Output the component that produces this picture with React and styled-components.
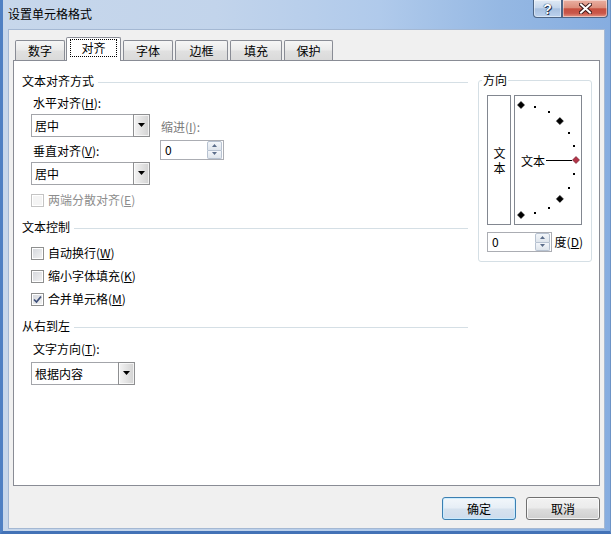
import React from 'react';
import styled, { createGlobalStyle } from 'styled-components';

const FONT = `"Noto Sans CJK SC", "Noto Sans", sans-serif`;

const Global = createGlobalStyle`
  html, body { margin: 0; padding: 0; background: #fff; }
  body { font-family: ${FONT}; font-size: 12px; color: #000; }
  * { box-sizing: border-box; }
`;

const Window = styled.div`
  width: 611px;
  height: 534px;
  display: flex;
  flex-direction: column;
  overflow: hidden;
  background: linear-gradient(to right, #c7d7eb 0%, #c2d4eb 35%, #b0caeb 62%, #95b8e3 82%, #86ade0 100%);
  border-left: 3px solid #4f80c3;
  border-right: 1px solid #6d93c6;
  border-bottom: 3px solid #4372b6;
`;

const TitleBar = styled.div`
  height: 29px;
  flex: none;
  display: flex;
  align-items: flex-start;
  padding-right: 2px;
`;

const Title = styled.div`
  flex: 1;
  padding-left: 5px;
  margin-top: 6px;
  line-height: 16px;
  font-size: 12px;
  color: #000;
`;

const CaptionButton = styled.div`
  height: 18px;
  width: ${p => p.$w}px;
  display: flex;
  align-items: center;
  justify-content: center;
  border: 1px solid #4d6585;
  border-top: none;
  border-radius: ${p => p.$radius};
  box-shadow: inset 0 0 0 1px rgba(255, 255, 255, 0.45);
  background: ${p => p.$bg};
`;

const HelpGlyph = styled.span`
  font-family: "Liberation Sans", sans-serif;
  font-weight: bold;
  font-size: 14px;
  line-height: 14px;
  color: #fff;
  text-shadow: 0 0 1px #1d2d48, 0 0 1px #1d2d48, 1px 1px 0 #2b3e5e;
`;

const Body = styled.div`
  flex: 1;
  margin: 0 5px 2px 5px;
  background: #f0f0f0;
  border: 1px solid #a4b8d3;
  padding: 7px 4px 0 4px;
  display: flex;
  flex-direction: column;
`;

const TabRow = styled.div`
  height: 24px;
  flex: none;
  display: flex;
  align-items: flex-end;
  gap: 2px;
  padding-left: 2px;
  margin-bottom: -1px;
  position: relative;
  z-index: 1;
`;

const Tab = styled.div`
  width: ${p => p.$w}px;
  height: ${p => (p.$active ? 24 : 20)}px;
  margin-bottom: ${p => (p.$active ? 0 : 1)}px;
  margin-left: ${p => (p.$active ? -1 : 0)}px;
  border: 1px solid #898c95;
  border-bottom: none;
  border-radius: 2px 2px 0 0;
  background: ${p =>
    p.$active ? '#fff' : 'linear-gradient(#f6f6f6, #ebebeb 45%, #e0e0e0 55%, #dadada)'};
  display: flex;
  justify-content: center;
  align-items: ${p => (p.$active ? 'flex-start' : 'center')};
  padding-top: ${p => (p.$active ? 1 : 0)}px;
  line-height: 16px;
`;

const Focus = styled.span`
  border: 1px dotted #000;
  padding: 0 10px;
  line-height: 16px;
`;

const Panel = styled.div`
  height: 426px;
  flex: none;
  background: #fff;
  border: 1px solid #898c95;
  display: flex;
  gap: 10px;
  padding: 12px 7px 0 8px;
`;

const LeftCol = styled.div`
  width: 446px;
  display: flex;
  flex-direction: column;
`;

const SectionHeader = styled.div`
  height: 16px;
  line-height: 16px;
  display: flex;
  align-items: center;
  gap: 4px;
  margin-top: ${p => p.$mt || 0}px;
  &::after {
    content: '';
    flex: 1;
    height: 1px;
    margin-top: 2px;
    background: #d5dfe5;
  }
`;

const Indent = styled.div`
  padding-left: 9px;
  display: flex;
  flex-direction: column;
`;

const FieldLabel = styled.div`
  height: 16px;
  line-height: 16px;
  margin-left: ${p => (p.$ml === undefined ? 2 : p.$ml)}px;
  margin-top: ${p => p.$mt || 0}px;
  color: ${p => (p.$dim ? '#7c7c7c' : '#000')};
  white-space: nowrap;
`;

const AlignRow = styled.div`
  display: flex;
  gap: 10px;
`;

const SubCol = styled.div`
  display: flex;
  flex-direction: column;
  padding-top: ${p => p.$pt || 0}px;
`;

const Combo = styled.div`
  width: ${p => p.$w}px;
  height: ${p => p.$h || 23}px;
  margin-top: ${p => p.$mt || 0}px;
  border: 1px solid #a3a5aa;
  background: #fff;
  display: flex;
  align-items: center;
  padding-left: 3px;
`;

const ComboText = styled.span`
  flex: 1;
  line-height: 16px;
`;

const DropBtn = styled.div`
  width: 17px;
  align-self: stretch;
  margin: -1px -1px -1px 0;
  border: 1px solid #8e8f91;
  background: linear-gradient(to right, #f4f4f4, #e3e3e3 50%, #d2d2d2);
  box-shadow: inset 0 0 0 1px rgba(255, 255, 255, 0.7);
  display: flex;
  align-items: center;
  justify-content: center;
`;

const Spinner = styled.div`
  width: ${p => p.$w}px;
  height: 20px;
  margin-top: ${p => p.$mt || 0}px;
  border: 1px solid #abadb3;
  background: #fff;
  display: flex;
  align-items: center;
  padding-left: 4px;
`;

const SpinText = styled.span`
  flex: 1;
  line-height: 16px;
`;

const SpinButtons = styled.div`
  width: 15px;
  height: 18px;
  display: flex;
  flex-direction: column;
  margin-right: 1px;
`;

const SpinHalf = styled.div`
  flex: 1;
  border: 1px solid #b7c2d1;
  border-radius: ${p => (p.$up ? '2px 2px 0 0' : '0 0 2px 2px')};
  border-top-width: ${p => (p.$up ? 1 : 0)}px;
  background: linear-gradient(#f3f6fa, #dfe5ec);
  display: flex;
  align-items: center;
  justify-content: center;
`;

const CheckRow = styled.div`
  height: 16px;
  display: flex;
  align-items: center;
  margin-top: ${p => p.$mt || 0}px;
  color: ${p => (p.$disabled ? '#8d8d8d' : '#000')};
  line-height: 16px;
`;

const CheckBox = styled.span`
  width: 13px;
  height: 13px;
  flex: none;
  border: 1px solid ${p => (p.$disabled ? '#c4c4c4' : '#8e8f8f')};
  background: ${p =>
    p.$disabled ? '#f4f4f4' : 'linear-gradient(135deg, #d3d6db, #f4f4f4)'};
  box-shadow: inset 0 0 0 1px #fff;
  margin-right: 4px;
  display: flex;
  align-items: center;
  justify-content: center;
`;

const Group = styled.fieldset`
  width: 114px;
  margin: -1px 0 0 0;
  align-self: flex-start;
  border: 1px solid #d5dfe5;
  border-radius: 3px;
  padding: 7px 8px 9px 3px;
  min-width: 0;
`;

const Legend = styled.legend`
  padding: 0 1px;
  line-height: 16px;
  font-size: 12px;
`;

const GroupContent = styled.div`
  margin-left: 5px;
  display: flex;
  flex-direction: column;
`;

const OrientRow = styled.div`
  display: flex;
  gap: 3px;
`;

const VertBox = styled.div`
  width: 24px;
  height: 130px;
  border: 1px solid #828790;
  display: flex;
  align-items: center;
  justify-content: center;
`;

const VertText = styled.span`
  writing-mode: vertical-rl;
  text-orientation: upright;
  letter-spacing: 3px;
  line-height: 16px;
  margin-top: 3px;
`;

const DialBox = styled.div`
  width: 68px;
  height: 130px;
  border: 1px solid #828790;
  display: flex;
`;

const DegreeRow = styled.div`
  display: flex;
  align-items: center;
  margin-top: 7px;
`;

const DegreeLabel = styled.span`
  margin-left: 3px;
  line-height: 16px;
  white-space: nowrap;
`;

const ButtonRow = styled.div`
  display: flex;
  justify-content: flex-end;
  gap: 10px;
  margin-top: 11px;
`;

const PushButton = styled.div`
  width: 74px;
  height: 23px;
  border: 1px solid ${p => (p.$default ? '#3c7fb1' : '#707070')};
  border-radius: 3px;
  background: ${p =>
    p.$default
      ? 'linear-gradient(#f2f7fb, #e6eef6 48%, #d6e2ee 52%, #cddced)'
      : 'linear-gradient(#f2f2f2, #ebebeb 48%, #dddddd 52%, #cfcfcf)'};
  box-shadow: inset 0 0 0 1px ${p => (p.$default ? 'rgba(200,235,255,0.9)' : 'rgba(255,255,255,0.75)')};
  display: flex;
  align-items: center;
  justify-content: center;
  line-height: 16px;
`;

const Arrow = ({ down = true, color = '#000', w = 7 }) => (
  <svg width={w} height={Math.ceil(w / 2) + 1} viewBox={`0 0 ${w} ${Math.ceil(w / 2) + 1}`}>
    {down ? (
      <polygon points={`0,0 ${w},0 ${w / 2},${Math.ceil(w / 2)}`} fill={color} />
    ) : (
      <polygon points={`0,${Math.ceil(w / 2)} ${w},${Math.ceil(w / 2)} ${w / 2},0`} fill={color} />
    )}
  </svg>
);

const SpinBox = ({ w, mt }) => (
  <Spinner $w={w} $mt={mt}>
    <SpinText>0</SpinText>
    <SpinButtons>
      <SpinHalf $up>
        <Arrow down={false} color="#5b6d8a" w={5} />
      </SpinHalf>
      <SpinHalf>
        <Arrow color="#5b6d8a" w={5} />
      </SpinHalf>
    </SpinButtons>
  </Spinner>
);

const ComboBox = ({ w, h, mt, children }) => (
  <Combo $w={w} $h={h} $mt={mt}>
    <ComboText>{children}</ComboText>
    <DropBtn>
      <Arrow w={7} />
    </DropBtn>
  </Combo>
);

const Check = ({ checked, disabled, mt, children }) => (
  <CheckRow $mt={mt} $disabled={disabled}>
    <CheckBox $disabled={disabled}>
      {checked && (
        <svg width="9" height="9" viewBox="0 0 9 9">
          <path d="M1 4.5 L3.5 7 L8 1.5" fill="none" stroke="#3d4f7a" strokeWidth="1.7" />
        </svg>
      )}
    </CheckBox>
    <span>{children}</span>
  </CheckRow>
);

const Dial = () => {
  const cx = 6;
  const cy = 64;
  const r = 55;
  const marks = [];
  for (let a = 90; a >= -90; a -= 15) {
    const rad = (a * Math.PI) / 180;
    const x = cx + r * Math.cos(rad);
    const y = cy - r * Math.sin(rad);
    if (a % 45 === 0) {
      const red = a === 0;
      const s = 3.5;
      marks.push(
        <polygon
          key={a}
          points={`${x},${y - s} ${x + s},${y} ${x},${y + s} ${x - s},${y}`}
          fill={red ? '#b23448' : '#000'}
          stroke={red ? '#6b1424' : '#000'}
          strokeWidth="0.6"
        />
      );
    } else {
      marks.push(
        <rect key={a} x={Math.round(x) - 1} y={Math.round(y) - 1} width="2" height="2" fill="#000" />
      );
    }
  }
  return (
    <svg width="66" height="128" viewBox="0 0 66 128">
      {marks}
      <text x="6" y="64" dominantBaseline="central" fontSize="12" fontFamily={FONT} fill="#000">
        文本
      </text>
      <line x1="31" y1="64.5" x2="57" y2="64.5" stroke="#000" strokeWidth="1" />
    </svg>
  );
};

const tabs = [
  { label: '数字', w: 50 },
  { label: '对齐', w: 55, active: true },
  { label: '字体', w: 50 },
  { label: '边框', w: 53 },
  { label: '填充', w: 52 },
  { label: '保护', w: 49 },
];

export default function App() {
  return (
    <>
      <Global />
      <Window>
        <TitleBar>
          <Title>设置单元格格式</Title>
          <CaptionButton
            $w={29}
            $radius="0 0 0 4px"
            $bg="linear-gradient(#dfe9f5, #c6d7ec 45%, #a9c1e0 52%, #bcd2ee)"
          >
            <HelpGlyph>?</HelpGlyph>
          </CaptionButton>
          <CaptionButton
            $w={46}
            $radius="0 0 4px 0"
            $bg="linear-gradient(#eab0a2, #dc8e7c 45%, #c7503f 52%, #c9574a 78%, #e49584)"
          >
            <svg width="13" height="11" viewBox="0 0 13 11">
              <path d="M2 1.5 L11 9.5 M11 1.5 L2 9.5" stroke="#3c1a1a" strokeWidth="4" strokeLinecap="square" />
              <path d="M2 1.5 L11 9.5 M11 1.5 L2 9.5" stroke="#fff" strokeWidth="2" strokeLinecap="square" />
            </svg>
          </CaptionButton>
        </TitleBar>
        <Body>
          <TabRow>
            {tabs.map(t => (
              <Tab key={t.label} $w={t.w} $active={t.active}>
                {t.active ? <Focus>{t.label}</Focus> : t.label}
              </Tab>
            ))}
          </TabRow>
          <Panel>
            <LeftCol>
              <SectionHeader>文本对齐方式</SectionHeader>
              <Indent>
                <AlignRow>
                  <SubCol>
                    <FieldLabel $mt={6}>
                      水平对齐(<u>H</u>):
                    </FieldLabel>
                    <ComboBox w={119} mt={3}>居中</ComboBox>
                    <FieldLabel $mt={6}>
                      垂直对齐(<u>V</u>):
                    </FieldLabel>
                    <ComboBox w={119} mt={3}>居中</ComboBox>
                  </SubCol>
                  <SubCol $pt={30}>
                    <FieldLabel $ml={1} $dim>
                      缩进(<u>I</u>):
                    </FieldLabel>
                    <SpinBox w={64} mt={5} />
                  </SubCol>
                </AlignRow>
                <Check disabled mt={7}>
                  两端分散对齐(<u>E</u>)
                </Check>
              </Indent>
              <SectionHeader $mt={11}>文本控制</SectionHeader>
              <Indent>
                <Check mt={10}>
                  自动换行(<u>W</u>)
                </Check>
                <Check mt={7}>
                  缩小字体填充(<u>K</u>)
                </Check>
                <Check checked mt={7}>
                  合并单元格(<u>M</u>)
                </Check>
              </Indent>
              <SectionHeader $mt={11}>从右到左</SectionHeader>
              <Indent>
                <FieldLabel $mt={7}>
                  文字方向(<u>T</u>):
                </FieldLabel>
                <ComboBox w={104} mt={5}>根据内容</ComboBox>
              </Indent>
            </LeftCol>
            <Group>
              <Legend>方向</Legend>
              <GroupContent>
                <OrientRow>
                  <VertBox>
                    <VertText>文本</VertText>
                  </VertBox>
                  <DialBox>
                    <Dial />
                  </DialBox>
                </OrientRow>
                <DegreeRow>
                  <SpinBox w={65} />
                  <DegreeLabel>
                    度(<u>D</u>)
                  </DegreeLabel>
                </DegreeRow>
              </GroupContent>
            </Group>
          </Panel>
          <ButtonRow>
            <PushButton $default>确定</PushButton>
            <PushButton>取消</PushButton>
          </ButtonRow>
        </Body>
      </Window>
    </>
  );
}
